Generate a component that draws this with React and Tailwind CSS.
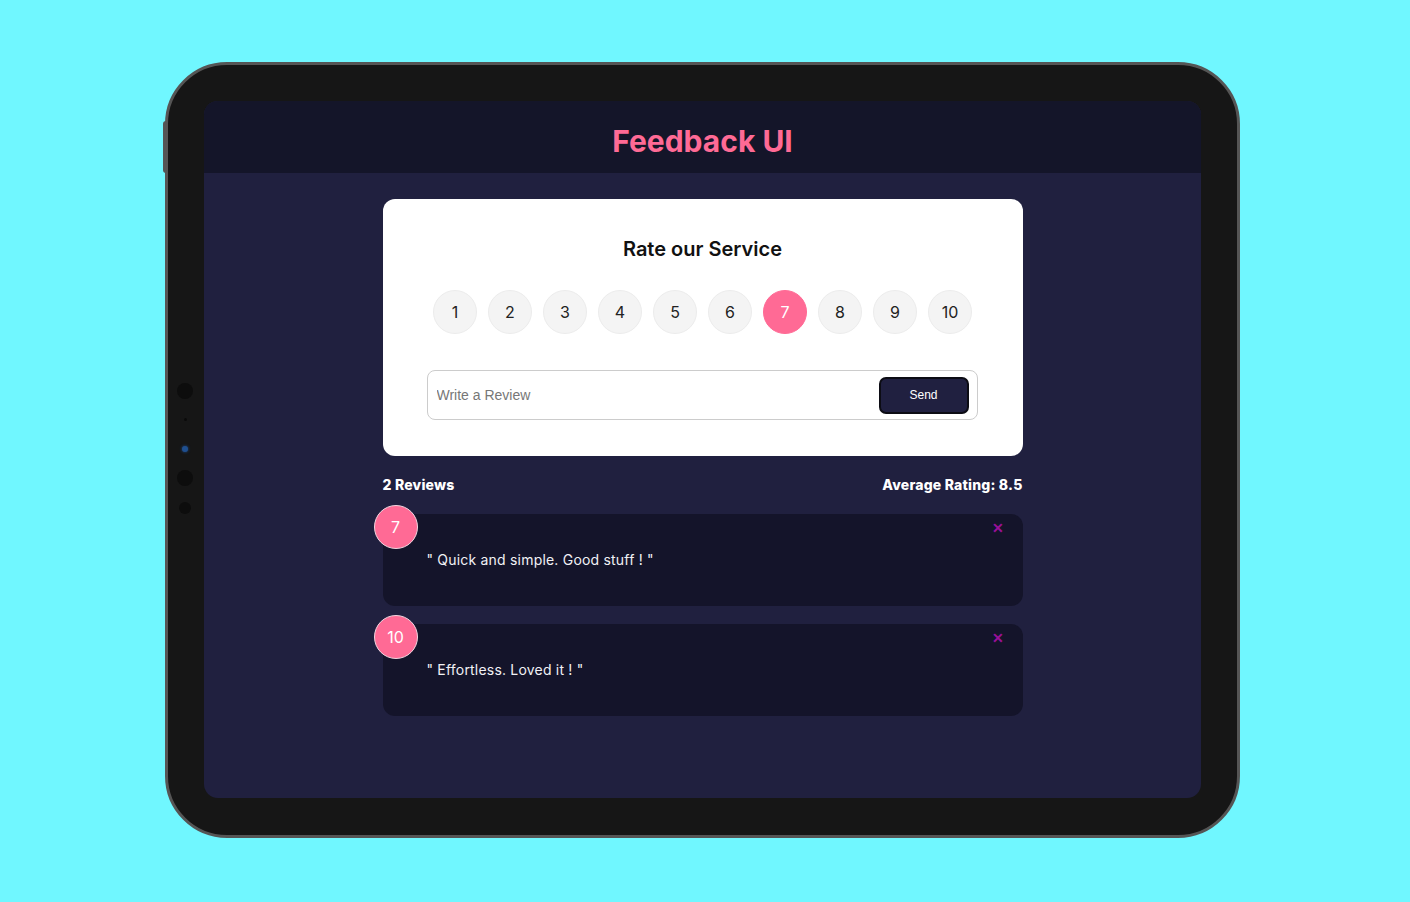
import { useState } from 'react';

const reviews = [
  { id: 1, rating: 7, text: 'Quick and simple. Good stuff !' },
  { id: 2, rating: 10, text: 'Effortless. Loved it !' },
];

function RatingPicker({ selected, onSelect }) {
  return (
    <ul className="flex justify-center gap-[11px]">
      {[1, 2, 3, 4, 5, 6, 7, 8, 9, 10].map((n) => (
        <li key={n}>
          <button
            onClick={() => onSelect(n)}
            className={
              n === selected
                ? 'w-[44px] h-[44px] rounded-full flex items-center justify-center text-[16px] bg-[#ff6a95] text-white border border-[#ff6a95]'
                : 'w-[44px] h-[44px] rounded-full flex items-center justify-center text-[16px] bg-[#f4f4f4] text-[#222] border border-[#ececec]'
            }
          >
            {n}
          </button>
        </li>
      ))}
    </ul>
  );
}

function ReviewCard({ rating, text }) {
  return (
    <div className="relative h-[92px] rounded-[12px] bg-[#14142a] pl-[44px] pt-[36px]">
      <div className="absolute -left-[9px] -top-[9px] w-[44px] h-[44px] rounded-full bg-[#ff6a95] border border-[#f3d6e0] flex items-center justify-center text-white text-[16px]">
        {rating}
      </div>
      <button className="absolute right-[19px] top-[7px] text-[#9a1098] text-[14px] font-bold leading-none">
        ✕
      </button>
      <p className="text-[14px] leading-[20px] tracking-[0.2px] text-[#f1f1f5]">" {text} "</p>
    </div>
  );
}

export default function App() {
  const [selected, setSelected] = useState(7);

  return (
    <div className="w-[1410px] h-[902px] bg-[#70f7ff] pl-[165px] pt-[62px] font-['Inter',sans-serif]">
      <div className="relative w-[1075px] h-[776px] rounded-[62px] bg-[#161616] border-[3px] border-[#555] p-[36px] pb-[37px]">
        {/* bezel bits */}
        <div className="absolute -left-[5px] top-[56px] w-[3px] h-[52px] rounded-l bg-[#555]" />
        <div className="absolute left-[8px] top-[318px] w-[18px] flex flex-col items-center">
          <span className="w-[16px] h-[16px] rounded-full bg-[#0d0d0d]" />
          <span className="mt-[19px] w-[3px] h-[3px] rounded-full bg-[#0a0a0a]" />
          <span className="mt-[25px] w-[6px] h-[6px] rounded-full bg-[#1f4f8f] shadow-[0_0_3px_#1f4f8f]" />
          <span className="mt-[18px] w-[16px] h-[16px] rounded-full bg-[#0d0d0d]" />
          <span className="mt-[16px] w-[12px] h-[12px] rounded-full bg-[#0d0d0d]" />
        </div>

        <div className="w-full h-full rounded-[14px] overflow-hidden bg-[#20203f] flex flex-col">
          <header className="h-[72px] shrink-0 bg-[#141529] flex items-center justify-center pt-[8px]">
            <h1 className="text-[30px] font-bold text-[#ff6a95]">Feedback UI</h1>
          </header>

          <main className="w-[640px] mx-auto pt-[26px]">
            <section className="bg-white rounded-[12px] pt-[36px] pb-[36px] px-[44px]">
              <h2 className="text-center text-[20px] leading-[28px] font-semibold text-[#111]">Rate our Service</h2>
              <div className="mt-[27px]">
                <RatingPicker selected={selected} onSelect={setSelected} />
              </div>
              <form
                onSubmit={(e) => e.preventDefault()}
                className="mt-[36px] w-[551px] h-[50px] border border-[#ccc] rounded-[8px] flex items-center pl-[9px] pr-[8px]"
              >
                <input
                  type="text"
                  placeholder="Write a Review"
                  className="flex-1 outline-none text-[14px] font-['Liberation_Sans',sans-serif] placeholder:text-[#777]"
                />
                <button className="w-[90px] h-[37px] rounded-[7px] bg-[#202040] border-2 border-[#0c0c14] text-white text-[12px] font-['Liberation_Sans',sans-serif]">
                  Send
                </button>
              </form>
            </section>

            <div className="mt-[19px] flex justify-between text-white text-[14px] leading-[20px] font-extrabold tracking-[0.2px]">
              <span>2 Reviews</span>
              <span>Average Rating: 8.5</span>
            </div>

            <div className="mt-[19px] flex flex-col gap-[18px]">
              {reviews.map((r) => (
                <ReviewCard key={r.id} rating={r.rating} text={r.text} />
              ))}
            </div>
          </main>
        </div>
      </div>
    </div>
  );
}
